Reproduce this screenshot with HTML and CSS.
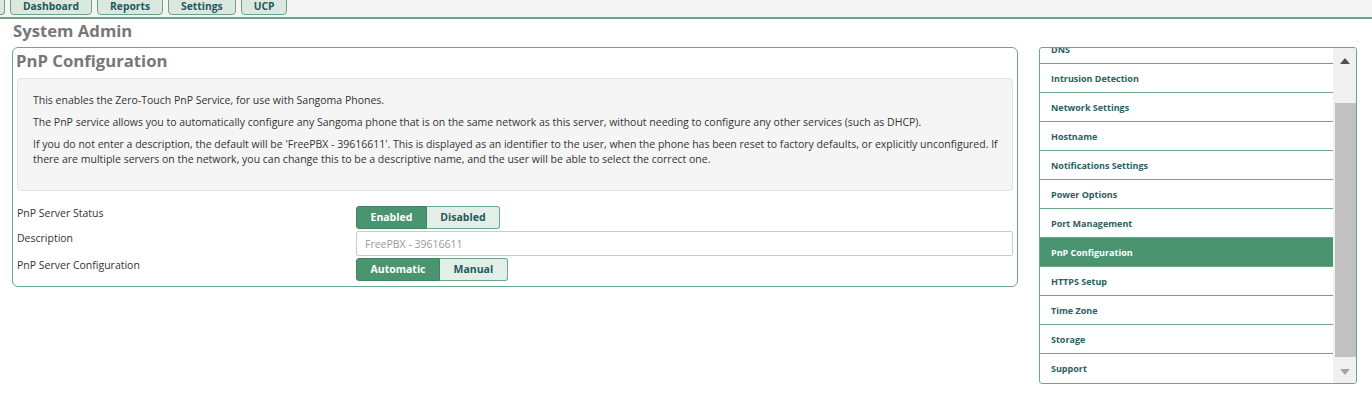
FILE: index.html
```html
<!DOCTYPE html>
<html lang="en">
<head>
  <meta charset="UTF-8" />
  <title>System Admin - PnP Configuration</title>
  <link rel="stylesheet" href="styles.css">
</head>
<body>

  <div class="topbar">
    <a class="tab tab-stub"></a>
    <a class="tab">Dashboard</a>
    <a class="tab">Reports</a>
    <a class="tab">Settings</a>
    <a class="tab">UCP</a>
  </div>

  <div class="page">
    <h1 class="page-title">System Admin</h1>

    <div class="layout">
      <div class="panel">
        <h2 class="panel-title">PnP Configuration</h2>

        <div class="info">
          <p>This enables the Zero-Touch PnP Service, for use with Sangoma Phones.</p>
          <p>The PnP service allows you to automatically configure any Sangoma phone that is on the same network as this server, without needing to configure any other services (such as DHCP).</p>
          <p>If you do not enter a description, the default will be 'FreePBX - 39616611'. This is displayed as an identifier to the user, when the phone has been reset to factory defaults, or explicitly unconfigured. If there are multiple servers on the network, you can change this to be a descriptive name, and the user will be able to select the correct one.</p>
        </div>

        <div class="form">
          <label class="form-label">PnP Server Status</label>
          <div class="toggle">
            <span class="toggle-btn active">Enabled</span>
            <span class="toggle-btn">Disabled</span>
          </div>

          <label class="form-label" for="desc">Description</label>
          <input class="text-input" id="desc" type="text" placeholder="FreePBX - 39616611">

          <label class="form-label">PnP Server Configuration</label>
          <div class="toggle">
            <span class="toggle-btn active">Automatic</span>
            <span class="toggle-btn">Manual</span>
          </div>
        </div>
      </div>

      <div class="sidebar">
        <ul class="side-list" id="sideList">
          <li>Activation</li>
          <li>DNS</li>
          <li>Intrusion Detection</li>
          <li>Network Settings</li>
          <li>Hostname</li>
          <li>Notifications Settings</li>
          <li>Power Options</li>
          <li>Port Management</li>
          <li class="current">PnP Configuration</li>
          <li>HTTPS Setup</li>
          <li>Time Zone</li>
          <li>Storage</li>
          <li>Support</li>
        </ul>
        <div class="scrollbar">
          <div class="sb-btn"><span class="arrow-up"></span></div>
          <div class="sb-track"><div class="sb-thumb"></div></div>
          <div class="sb-btn"><span class="arrow-down"></span></div>
        </div>
      </div>
    </div>
  </div>

  <script>
    var list = document.getElementById('sideList');
    list.scrollTop = list.scrollHeight;
  </script>

</body>
</html>
```

FILE: styles.css
```css
body {
  margin: 0;
  background-color: #fff;
  color: #333;
  font-family: 'Open Sans', 'Liberation Sans', sans-serif;
  font-size: 10.5px;
}

/* top menu */
.topbar {
  height: 17px;
  background-color: #f4f4f4;
  border-bottom: 2px solid #67a584;
  display: flex;
  gap: 5px;
  align-items: flex-start;
}

.tab {
  height: 20px;
  margin-top: -5px;
  padding: 0 12px;
  background-color: #dbe8e0;
  border: 1px solid #6ba386;
  border-radius: 0 0 4px 4px;
  color: #1e5a5a;
  font-weight: bold;
  font-size: 10.3px;
  line-height: 21px;
  box-sizing: border-box;
}

.tab-stub {
  width: 5px;
  padding: 0;
  border-left: none;
  border-radius: 0 0 4px 0;
}

.page {
  padding: 0 15px 0 12px;
}

.page-title {
  margin: 1px 0 6px 1px;
  font-size: 16.7px;
  line-height: 21px;
  color: #777;
}

.layout {
  display: flex;
  gap: 21px;
  align-items: flex-start;
}

/* main panel */
.panel {
  flex: 1;
  border: 1px solid #6aa888;
  border-radius: 6px;
  padding: 0 4px 5px;
}

.panel-title {
  margin: 2px 0 6px -1px;
  font-size: 16.7px;
  line-height: 22px;
  color: #777;
}

.info {
  background-color: #f5f5f5;
  border: 1px solid #e3e3e3;
  border-radius: 4px;
  padding: 14px 8px 16px 15px;
}

.info p {
  margin: 0 0 7px;
  line-height: 15px;
}

.form {
  display: grid;
  grid-template-columns: 339px 1fr;
  row-gap: 2px;
  margin-top: 15px;
}

.form-label {
  line-height: 15px;
  color: #333;
}

.toggle {
  display: flex;
}

.toggle-btn {
  height: 23px;
  box-sizing: border-box;
  padding: 0 13.5px;
  line-height: 21px;
  font-size: 10.5px;
  font-weight: bold;
  color: #1e5a5a;
  background-color: #e3eee8;
  border: 1px solid #6aa888;
}

.toggle-btn:first-child {
  border-radius: 3px 0 0 3px;
}

.toggle-btn:last-child {
  border-radius: 0 3px 3px 0;
  border-left: none;
}

.toggle-btn.active {
  background-color: #4a9470;
  border-color: #3f8362;
  color: #fff;
}

.text-input {
  height: 25px;
  box-sizing: border-box;
  margin: 0;
  padding: 0 8px;
  border: 1px solid #ccc;
  border-radius: 2px;
  font-family: inherit;
  font-size: 10.5px;
}

.text-input::placeholder {
  color: #999;
}

/* module menu */
.sidebar {
  width: 318px;
  height: 337px;
  box-sizing: border-box;
  border: 1px solid #6aa888;
  border-radius: 3px;
  overflow: hidden;
  display: flex;
}

.side-list {
  flex: 1;
  list-style: none;
  margin: 0;
  padding: 0;
  overflow: hidden;
}

.side-list li {
  height: 29px;
  box-sizing: border-box;
  padding-left: 11px;
  border-bottom: 1px solid #6aa888;
  line-height: 29px;
  font-size: 9px;
  font-weight: bold;
  color: #2a6161;
}

.side-list li:last-child {
  border-bottom: none;
}

.side-list li.current {
  background-color: #4a9470;
  color: #fff;
}

.scrollbar {
  width: 23px;
  background-color: #f0f0f0;
  display: flex;
  flex-direction: column;
}

.sb-btn {
  height: 23px;
  display: flex;
  align-items: center;
  justify-content: center;
}

.sb-track {
  flex: 1;
}

.sb-thumb {
  margin: 32px 0 0 2px;
  height: 254px;
  background-color: #c1c1c1;
}

.arrow-up {
  border-left: 5px solid transparent;
  border-right: 5px solid transparent;
  border-bottom: 6px solid #505050;
  margin-top: 3px;
}

.arrow-down {
  border-left: 5px solid transparent;
  border-right: 5px solid transparent;
  border-top: 6px solid #a3a3a3;
}
```
